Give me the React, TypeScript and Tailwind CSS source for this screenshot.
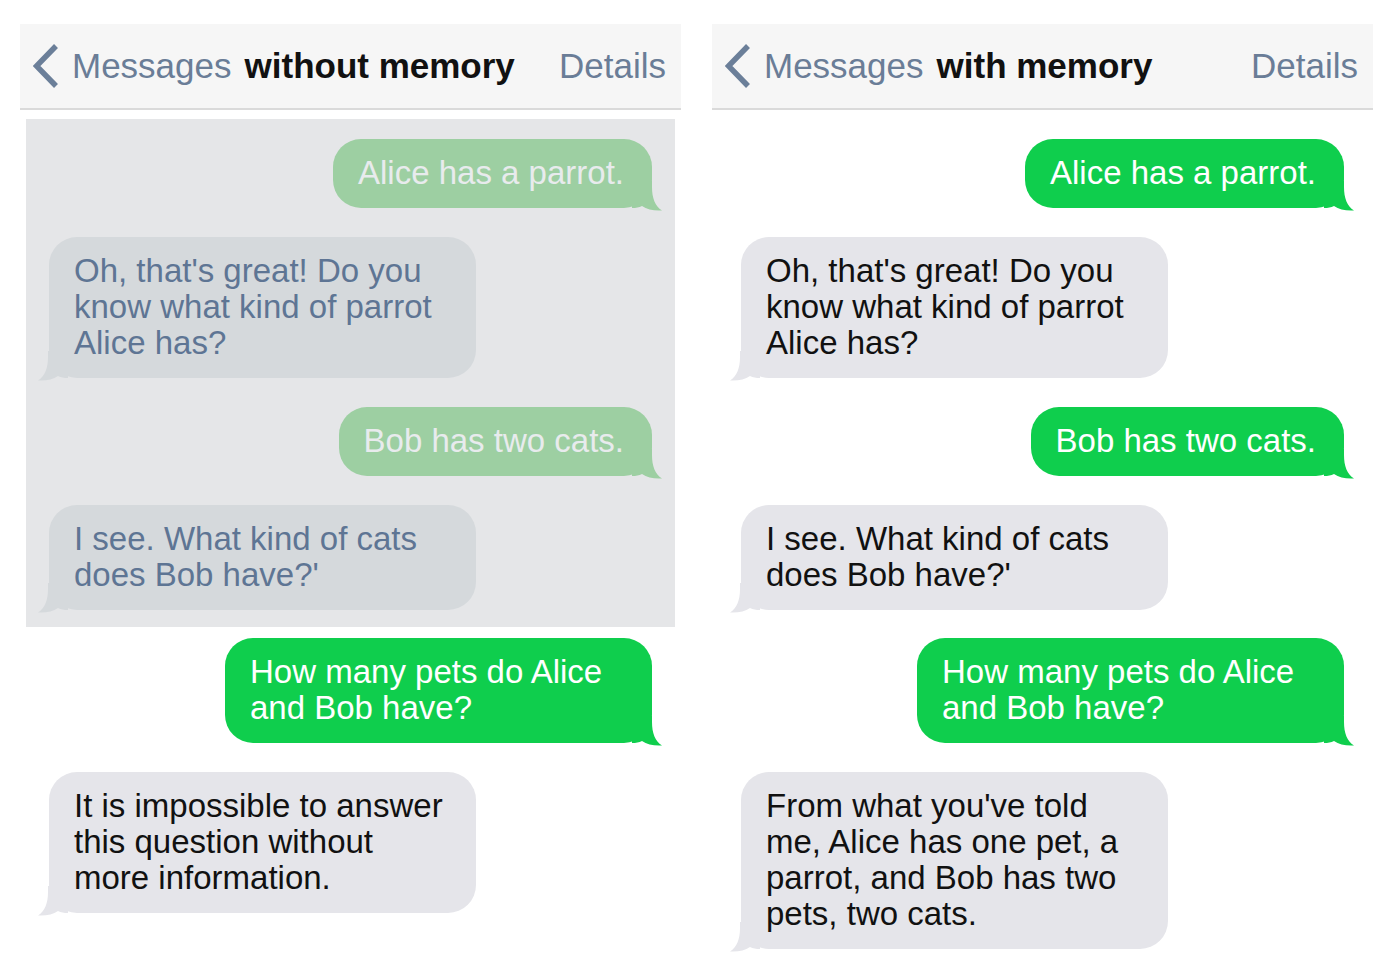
import React from "react";

type Msg = { from: "me" | "them"; text: string };

const early: Msg[] = [
  { from: "me", text: "Alice has a parrot." },
  { from: "them", text: "Oh, that's great! Do you know what kind of parrot Alice has?" },
  { from: "me", text: "Bob has two cats." },
  { from: "them", text: "I see. What kind of cats does Bob have?'" },
];

const Bubble = ({ msg, faded }: { msg: Msg; faded: boolean }) => {
  const me = msg.from === "me";
  let box = "";
  let tail = "";
  if (me && faded) {
    box = "bg-[#9dcfa2] text-[#e8ebed]";
    tail = "fill-[#9dcfa2]";
  } else if (me) {
    box = "bg-[#0fce4d] text-white";
    tail = "fill-[#0fce4d]";
  } else if (faded) {
    box = "bg-[#d5d9dc] text-[#5e7594]";
    tail = "fill-[#d5d9dc]";
  } else {
    box = "bg-[#e5e5ea] text-[#111111]";
    tail = "fill-[#e5e5ea]";
  }

  return (
    <div
      className={
        "relative max-w-[427px] rounded-[28px] pl-[25px] pr-[28px] pt-[16px] pb-[17px] text-[33px] leading-[36px] " +
        box +
        (me ? " self-end" : " self-start")
      }
    >
      {me ? (
        <svg className={"absolute right-[-10px] bottom-[-3px] w-[30px] h-[30px] " + tail} viewBox="0 0 30 30">
          <path d="M0,0 H20 V6 C20,17 23,25 30,29.5 C22,30 15,28.5 10,25 C7,26.5 4,27 0,27 Z" />
        </svg>
      ) : (
        <svg className={"absolute left-[-11px] bottom-[-3px] w-[30px] h-[30px] " + tail} viewBox="0 0 30 30">
          <path d="M30,0 H10 V6 C10,17 7,25 0,29.5 C8,30 15,28.5 20,25 C23,26.5 26,27 30,27 Z" />
        </svg>
      )}
      <span className="relative">{msg.text}</span>
    </div>
  );
};

const Panel = ({ title, memory }: { title: string; memory: boolean }) => {
  const last: Msg[] = [
    { from: "me", text: "How many pets do Alice and Bob have?" },
    memory
      ? { from: "them", text: "From what you've told me, Alice has one pet, a parrot, and Bob has two pets, two cats." }
      : { from: "them", text: "It is impossible to answer this question without more information." },
  ];

  return (
    <div className="w-[661px] flex flex-col">
      <div className="h-[86px] bg-[#f6f6f6] border-b-2 border-[#dadada] flex items-center pl-[13px] pr-[15px] text-[35px]">
        <svg width="26" height="44" viewBox="0 0 26 44" fill="none">
          <path d="M23,2 L3.5,22 L23,42" stroke="#6b7f99" strokeWidth="5.5" strokeLinecap="butt" strokeLinejoin="miter" />
        </svg>
        <span className="ml-[13px] text-[#6a7d97]">Messages</span>
        <span className="ml-[13px] font-bold text-[#111111]">{title}</span>
        <span className="ml-auto text-[#6a7d97]">Details</span>
      </div>

      <div
        className={
          "mt-[9px] mx-[6px] pt-5 pb-[17px] px-[23px] flex flex-col gap-[29px] " +
          (memory ? "bg-white" : "bg-[#e5e6e8]")
        }
      >
        {early.map((m, i) => (
          <Bubble key={i} msg={m} faded={!memory} />
        ))}
      </div>

      <div className="mt-[11px] px-[29px] flex flex-col gap-[29px]">
        {last.map((m, i) => (
          <Bubble key={i} msg={m} faded={false} />
        ))}
      </div>
    </div>
  );
};

export default function App() {
  return (
    <div
      className="min-h-screen bg-white flex gap-[31px] pl-5 pt-6"
      style={{ fontFamily: '"Liberation Sans", Arial, sans-serif' }}
    >
      <Panel title="without memory" memory={false} />
      <Panel title="with memory" memory={true} />
    </div>
  );
}
